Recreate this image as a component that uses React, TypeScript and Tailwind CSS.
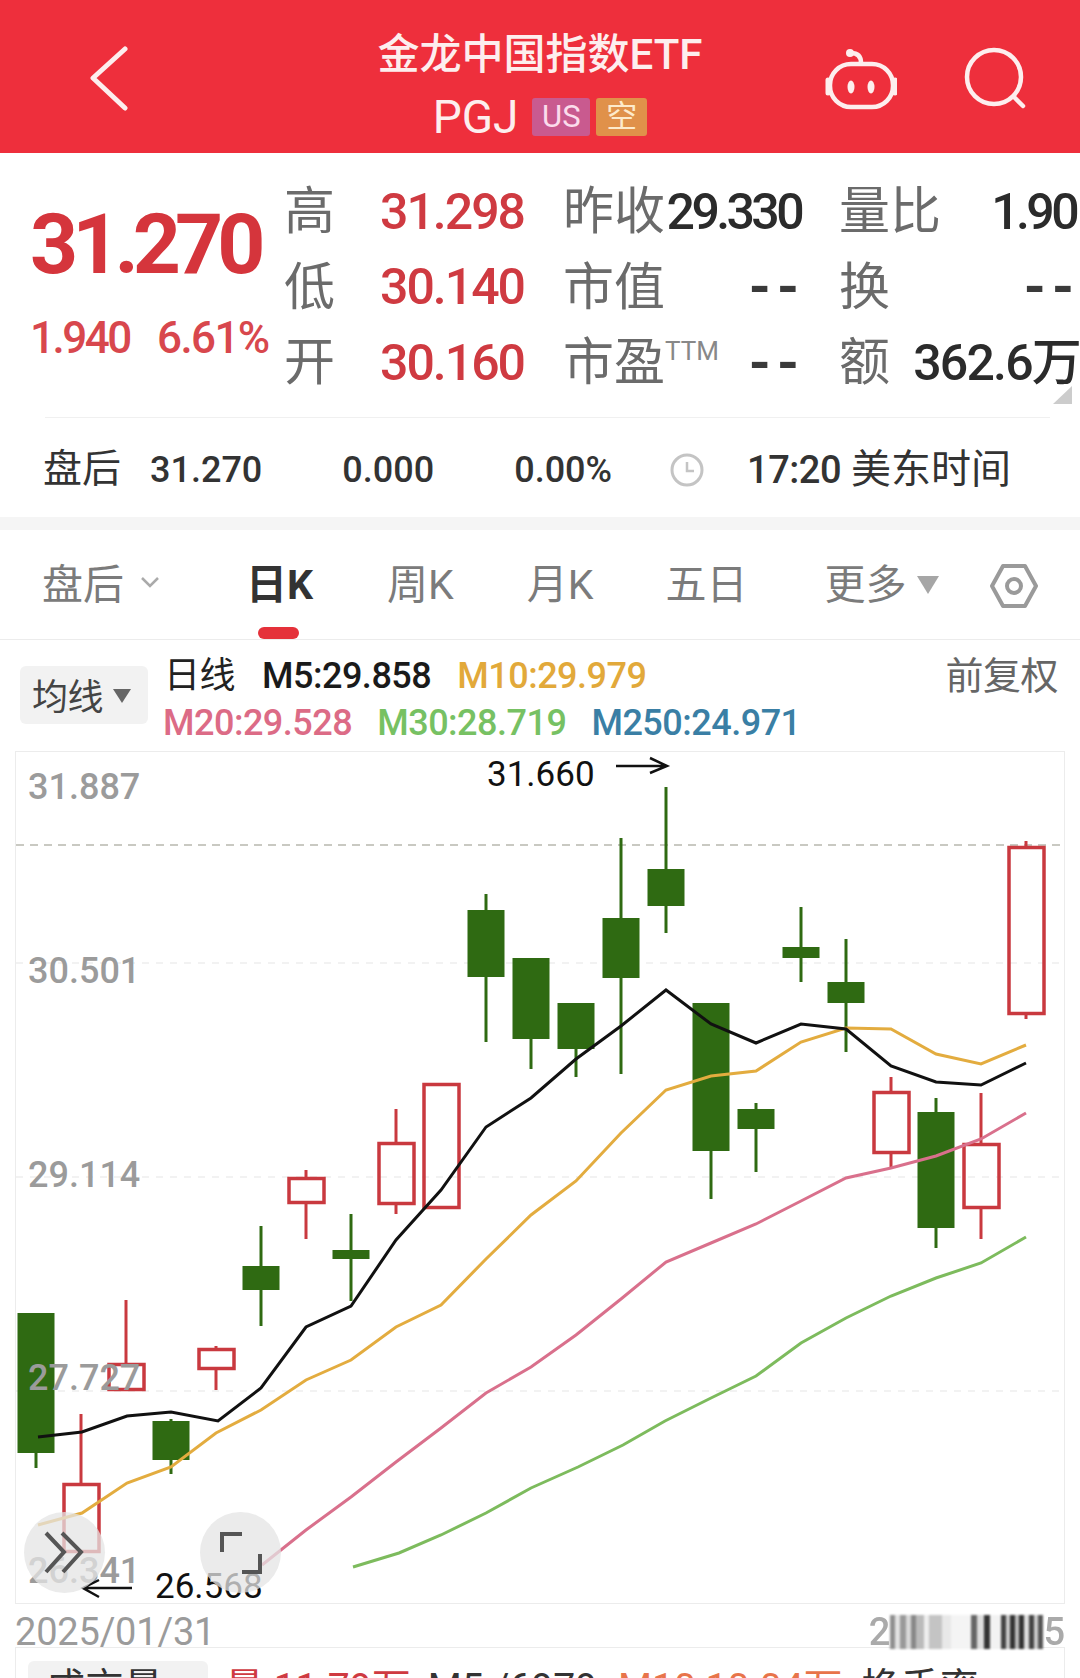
import { ReactNode } from 'react';

type Candle = { x: number; high: number; top: number; bot: number; low: number; up: boolean };

const RED = '#c9393f';
const GREEN = '#2f6a12';

const candles: Candle[] = [
  { x: 36, high: 1313, top: 1313, bot: 1453, low: 1468, up: false },
  { x: 81, high: 1414, top: 1483, bot: 1553, low: 1553, up: true },
  { x: 126, high: 1300, top: 1363, bot: 1391, low: 1391, up: true },
  { x: 171, high: 1419, top: 1421, bot: 1460, low: 1474, up: false },
  { x: 216, high: 1346, top: 1348, bot: 1370, low: 1390, up: true },
  { x: 261, high: 1226, top: 1266, bot: 1290, low: 1326, up: false },
  { x: 306, high: 1170, top: 1177, bot: 1204, low: 1239, up: true },
  { x: 351, high: 1214, top: 1250, bot: 1259, low: 1301, up: false },
  { x: 396, high: 1109, top: 1142, bot: 1205, low: 1214, up: true },
  { x: 441, high: 1083, top: 1083, bot: 1209, low: 1209, up: true },
  { x: 486, high: 894, top: 910, bot: 977, low: 1042, up: false },
  { x: 531, high: 958, top: 958, bot: 1039, low: 1069, up: false },
  { x: 576, high: 1003, top: 1003, bot: 1049, low: 1077, up: false },
  { x: 621, high: 838, top: 918, bot: 978, low: 1074, up: false },
  { x: 666, high: 787, top: 869, bot: 906, low: 933, up: false },
  { x: 711, high: 1003, top: 1003, bot: 1151, low: 1199, up: false },
  { x: 756, high: 1103, top: 1109, bot: 1129, low: 1172, up: false },
  { x: 801, high: 907, top: 947, bot: 958, low: 982, up: false },
  { x: 846, high: 939, top: 982, bot: 1003, low: 1052, up: false },
  { x: 891, high: 1077, top: 1091, bot: 1154, low: 1167, up: true },
  { x: 936, high: 1098, top: 1112, bot: 1228, low: 1248, up: false },
  { x: 981, high: 1093, top: 1143, bot: 1209, low: 1239, up: true },
  { x: 1026, high: 841, top: 846, bot: 1015, low: 1019, up: true },
];

const m5 = '38,1437 82,1432 127,1416 171,1412 218,1421 261,1388 306,1327 351,1306 396,1240 441,1190 486,1127 531,1098 576,1059 621,1026 666,990 711,1024 756,1043 801,1024 846,1029 891,1066 936,1082 981,1085 1026,1063';
const m10 = '38,1525 82,1513 127,1483 171,1467 216,1433 261,1410 306,1380 351,1360 396,1327 441,1305 486,1259 531,1215 576,1181 621,1133 666,1090 711,1076 756,1071 801,1042 846,1028 891,1029 936,1054 981,1064 1026,1045';
const m20 = '262,1565 306,1530 351,1497 396,1462 441,1428 486,1393 531,1367 576,1335 621,1299 666,1262 711,1243 756,1224 801,1201 846,1178 891,1168 936,1156 981,1139 1026,1113';
const m30 = '353,1567 399,1553 441,1535 486,1513 531,1488 578,1467 623,1445 665,1421 711,1398 756,1376 801,1343 846,1318 891,1296 936,1278 981,1263 1026,1237';

const smear: [number, string][] = [
  [5, '#8f8f8f'], [5, '#e2e2e2'], [6, '#999'], [5, '#d8d8d8'], [5, '#888'], [8, '#bbb'], [5, '#eee'],
  [13, '#c4c4c4'], [9, '#e8e8e8'], [20, '#f4f4f4'], [6, '#666'], [7, '#ddd'], [6, '#333'], [11, '#f2f2f2'],
  [5, '#444'], [4, '#ccc'], [5, '#333'], [4, '#bbb'], [5, '#333'], [5, '#ddd'], [5, '#444'], [4, '#ccc'], [5, '#555'],
];

function Label({ children }: { children: ReactNode }) {
  return <span className="text-[51px] leading-none whitespace-nowrap text-[#6b6b6b]">{children}</span>;
}

function StatValue({ children, red }: { children: ReactNode; red?: boolean }) {
  return (
    <span className={`text-[50px] leading-none font-medium ${red ? 'tracking-[-2px] text-[#cf3a41]' : 'tracking-[-3.6px] text-[#2b2b2b]'}`}>
      {children}
    </span>
  );
}

function Dashes() {
  return <span className="text-[56px] leading-none font-bold text-[#3a3a3a] tracking-[6px] -mr-[4px]">--</span>;
}

function KlineChart() {
  return (
    <svg viewBox="16 752 1048 851" className="block w-[1048px] h-[851px]">
      {[963, 1177, 1391].map((y) => (
        <line key={y} x1="16" x2="1064" y1={y} y2={y} stroke="#eeeeee" strokeWidth="1.5" strokeDasharray="7 7" />
      ))}
      <line x1="16" x2="1064" y1="845" y2="845" stroke="#b8b8ae" strokeWidth="1.5" strokeDasharray="8 6" />

      {candles.map((c) => {
        const color = c.up ? RED : GREEN;
        return (
          <g key={c.x}>
            <line x1={c.x} x2={c.x} y1={c.high} y2={c.top} stroke={color} strokeWidth="3" />
            <line x1={c.x} x2={c.x} y1={c.bot} y2={c.low} stroke={color} strokeWidth="3" />
            {c.up ? (
              <rect x={c.x - 17} y={c.top + 1.5} width="35" height={c.bot - c.top - 3} fill="none" stroke={color} strokeWidth="3.5" />
            ) : (
              <rect x={c.x - 18.5} y={c.top} width="37" height={c.bot - c.top} fill={color} />
            )}
          </g>
        );
      })}

      <polyline points={m30} fill="none" stroke="#7dbb5d" strokeWidth="3" />
      <polyline points={m20} fill="none" stroke="#d9708c" strokeWidth="3" />
      <polyline points={m10} fill="none" stroke="#e3ac3f" strokeWidth="3" />
      <polyline points={m5} fill="none" stroke="#111111" strokeWidth="3" />

      <g fill="#9b9b9b" fontSize="36" fontWeight="500" fontFamily="Roboto, sans-serif">
        <text x="28" y="799">31.887</text>
        <text x="28" y="983">30.501</text>
        <text x="28" y="1187">29.114</text>
        <text x="28" y="1390">27.727</text>
        <text x="28" y="1583">26.341</text>
      </g>

      <g fill="#111" fontSize="35" fontFamily="Roboto, sans-serif">
        <text x="487" y="786">31.660</text>
        <text x="155" y="1598">26.568</text>
      </g>
      <g fill="none" stroke="#111" strokeWidth="2.5">
        <path d="M616 766H667M650 758L667 766L650 773" />
        <path d="M132 1588H83M99 1580L83 1588L99 1597" />
      </g>
    </svg>
  );
}

export default function App() {
  return (
    <div className="h-[1678px] w-[1080px] overflow-hidden bg-white font-[Roboto,'Noto_Sans_CJK_SC',sans-serif]">
      {/* Top bar */}
      <header className="flex h-[153px] bg-[#ee2f3c] text-[#fdeeee]">
        <div className="w-[260px] pl-[89px] pt-[45px]">
          <svg width="40" height="66" viewBox="0 0 40 66" fill="none" stroke="#fdeeee" strokeWidth="5" strokeLinecap="round" strokeLinejoin="round">
            <path d="M36 4L4 33L36 63" />
          </svg>
        </div>
        <div className="flex flex-1 flex-col items-center pt-[30px]">
          <div className="text-[42px] leading-[50px] font-medium whitespace-nowrap">金龙中国指数ETF</div>
          <div className="mt-[18px] flex h-[38px] items-center">
            <span className="text-[46px] leading-none">PGJ</span>
            <span className="ml-[14px] flex h-[38px] w-[58px] items-center justify-center rounded-[3px] bg-[#c95a8f] text-[31px] text-[#fbdcec]">US</span>
            <span className="ml-[6px] flex h-[38px] w-[51px] items-center justify-center rounded-[3px] bg-[#e0914a] text-[31px] text-[#fdeacb]">空</span>
          </div>
        </div>
        <div className="flex w-[260px] pl-[5px] pt-[47px] gap-[67px]">
          <svg width="72" height="64" viewBox="825 47 72 64" fill="none" stroke="#fdeeee" strokeWidth="4.5" strokeLinecap="round">
            <rect x="830" y="64" width="63" height="43" rx="21" />
            <path d="M861 63C861 56 857 53 851 53" />
            <circle cx="850" cy="53" r="4" fill="#fdeeee" stroke="none" />
            <path d="M828 80V93M895 80V93" strokeWidth="5" />
            <ellipse cx="851" cy="87" rx="3.5" ry="6.5" fill="#fdeeee" stroke="none" />
            <ellipse cx="871" cy="87" rx="3.5" ry="6.5" fill="#fdeeee" stroke="none" />
          </svg>
          <svg width="62" height="62" viewBox="964 49 62 62" fill="none" stroke="#fdeeee" strokeWidth="4.5" strokeLinecap="round">
            <circle cx="994" cy="79" r="27" />
            <path d="M1015 100L1023 108" />
          </svg>
        </div>
      </header>

      {/* Quote block */}
      <section className="relative flex h-[265px]">
        <div className="w-[284px] pl-[30px] pt-[50px]">
          <div className="text-[84px] leading-[84px] font-bold tracking-[-6px] text-[#d5353c]">31.270</div>
          <div className="mt-[26px] flex h-[50px] items-center text-[44px] font-medium tracking-[-2.5px] text-[#d8474d]">
            <span className="w-[127px]">1.940</span>
            <span className="tracking-[-1.6px]">6.61%</span>
          </div>
        </div>
        <div className="mt-[21px] grid h-[227px] flex-1 grid-cols-[96px_183px_276px_241px] grid-rows-[75.5px_75.5px_75.5px] items-center">
          <Label>高</Label>
          <StatValue red>31.298</StatValue>
          <div className="flex w-[238px] items-center justify-between">
            <Label>昨收</Label>
            <StatValue>29.330</StatValue>
          </div>
          <div className="flex w-[237px] items-center justify-between">
            <Label>量比</Label>
            <StatValue>1.90</StatValue>
          </div>

          <Label>低</Label>
          <StatValue red>30.140</StatValue>
          <div className="flex w-[238px] items-center justify-between">
            <Label>市值</Label>
            <Dashes />
          </div>
          <div className="flex w-[237px] items-center justify-between">
            <Label>换</Label>
            <Dashes />
          </div>

          <Label>开</Label>
          <StatValue red>30.160</StatValue>
          <div className="flex w-[238px] items-center justify-between">
            <span className="flex items-start">
              <Label>市盈</Label>
              <span className="mt-[1px] text-[26px] leading-none text-[#888]">TTM</span>
            </span>
            <Dashes />
          </div>
          <div className="flex w-[241px] items-center justify-between">
            <Label>额</Label>
            <span className="text-[50px] leading-none font-medium tracking-[-1.8px] text-[#2b2b2b]">362.6万</span>
          </div>
        </div>
        <svg width="19" height="18" viewBox="0 0 19 18" className="absolute right-[8px] bottom-[14px]">
          <path d="M0 18L19 0V18Z" fill="#cccccc" />
        </svg>
        <div className="absolute bottom-0 left-[45px] h-[1.5px] w-[1005px] bg-[#f0f0f0]" />
      </section>

      {/* After-hours row */}
      <section className="flex h-[99px] items-center pt-[4px] text-[#333]">
        <span className="ml-[43px] text-[39px] leading-none">盘后</span>
        <span className="ml-[29px] text-[36px] font-medium leading-none">31.270</span>
        <span className="ml-[80px] text-[36px] font-medium leading-none">0.000</span>
        <span className="ml-[80px] text-[36px] font-medium leading-none">0.00%</span>
        <svg width="34" height="34" viewBox="0 0 34 34" fill="none" stroke="#c4c4c4" strokeWidth="3" className="ml-[58px]">
          <circle cx="17" cy="17" r="15" />
          <path d="M17 9V18H24" strokeWidth="2.5" />
        </svg>
        <span className="ml-[43px] text-[38px] font-medium leading-none tracking-[-0.5px]">17:20</span>
        <span className="ml-[10px] text-[40px] leading-none">美东时间</span>
      </section>

      <div className="h-[13px] bg-[#f5f5f5]" />

      {/* Period tabs */}
      <nav className="relative flex h-[110px] items-center border-b border-[#ececec] pt-[2px] text-[41px] leading-none text-[#7b7b7b]">
        <span className="ml-[42px]">盘后</span>
        <svg width="20" height="12" viewBox="0 0 20 12" fill="none" stroke="#aaa" strokeWidth="2.5" className="ml-[16px] -mt-[8px]">
          <path d="M2 2L10 10L18 2" />
        </svg>
        <span className="ml-[86px] font-bold text-[#333]">日K</span>
        <span className="ml-[74px]">周K</span>
        <span className="ml-[73px]">月K</span>
        <span className="ml-[72px]">五日</span>
        <span className="ml-[77px]">更多</span>
        <svg width="24" height="20" viewBox="0 0 24 20" className="ml-[9px] -mt-[2px]">
          <path d="M1 1H23L12 19Z" fill="#a6a6a6" />
        </svg>
        <svg width="48" height="46" viewBox="0 0 48 46" fill="none" stroke="#9a9a9a" strokeWidth="4" className="ml-[50px]">
          <path d="M13 3H35L46 23L35 43H13L2 23Z" strokeLinejoin="round" />
          <circle cx="24" cy="23" r="7" />
        </svg>
        <div className="absolute bottom-0 left-[258px] h-[12px] w-[41px] rounded-full bg-[#e5313a]" />
      </nav>

      {/* Moving average legend */}
      <section className="flex h-[111px] text-[36px] leading-none tracking-[-0.5px]">
        <div className="ml-[20px] mt-[26px] flex h-[58px] w-[128px] items-center rounded-[6px] bg-[#f2f2f2] pl-[12px] pt-[5px] text-[#444]">
          均线
          <svg width="18" height="14" viewBox="0 0 18 14" className="ml-[10px] -mt-[4px]">
            <path d="M0 0H18L9 14Z" fill="#666" />
          </svg>
        </div>
        <div className="ml-[16px] pt-[15px]">
          <div className="flex h-[42px] items-center">
            <span className="text-[#222]">日线</span>
            <span className="ml-[27px] font-medium text-[#1a1a1a]">M5:29.858</span>
            <span className="ml-[26px] font-medium text-[#e2a93a]">M10:29.979</span>
          </div>
          <div className="mt-[5px] flex h-[42px] items-center font-medium">
            <span className="-ml-[1px] text-[#dc6b86]">M20:29.528</span>
            <span className="ml-[25px] text-[#77c163]">M30:28.719</span>
            <span className="ml-[25px] text-[#3a7fa5]">M250:24.971</span>
          </div>
        </div>
        <span className="ml-auto mr-[22px] pt-[17px] text-[38px] text-[#666]">前复权</span>
      </section>

      {/* Candlestick chart */}
      <div className="relative mx-[15px] w-[1050px] border border-[#ececec]">
        <KlineChart />
        <button className="absolute left-[8px] top-[760px] flex h-[81px] w-[81px] items-center justify-center rounded-full bg-[#e4e4e4]/75">
          <svg width="44" height="46" viewBox="0 0 44 46" fill="none" stroke="#555" strokeWidth="4">
            <path d="M3 3L21 22L3 42M19 3L38 22L20 42" />
          </svg>
        </button>
        <button className="absolute left-[184px] top-[760px] flex h-[81px] w-[81px] items-center justify-center rounded-full bg-[#e4e4e4]/75">
          <svg width="46" height="46" viewBox="0 0 46 46" fill="none" stroke="#555" strokeWidth="4">
            <path d="M4 22V4H24M42 24V42H24" />
          </svg>
        </button>
      </div>

      {/* Date axis */}
      <div className="flex h-[43px] items-start justify-between px-[15px] pt-[9px] text-[38px] leading-[38px] text-[#9b9b9b]">
        <span className="tracking-[-0.2px]">2025/01/31</span>
        <div className="relative z-10 flex items-center">
          <span className="font-medium text-[#aaa] blur-[0.6px]">2</span>
          <div className="flex h-[34px] blur-[1px]">
            {smear.map(([w, c], i) => (
              <div key={i} style={{ width: w, backgroundColor: c }} />
            ))}
          </div>
          <span className="font-medium text-[#aaa] blur-[0.6px]">5</span>
        </div>
      </div>

      {/* Volume panel, cut off by the bottom edge */}
      <section className="mx-[15px] flex h-[40px] w-[1050px] overflow-hidden border-x border-t border-[#ececec] pl-[12px] pt-[13px] text-[39px] leading-none">
        <div className="h-[60px] w-[180px] rounded-[6px] bg-[#f2f2f2] pl-[18px] pt-[8px] text-[#333]">成交量</div>
        <div className="ml-[17px] flex pt-[8px] whitespace-nowrap">
          <span className="text-[#cf3a41]">量 11.79万</span>
          <span className="ml-[17px] text-[#333]">M5 /6979</span>
          <span className="ml-[21px] text-[#e8744a]">M10 10.04万</span>
          <span className="ml-[19px] text-[#333]">换手率</span>
        </div>
      </section>
    </div>
  );
}
